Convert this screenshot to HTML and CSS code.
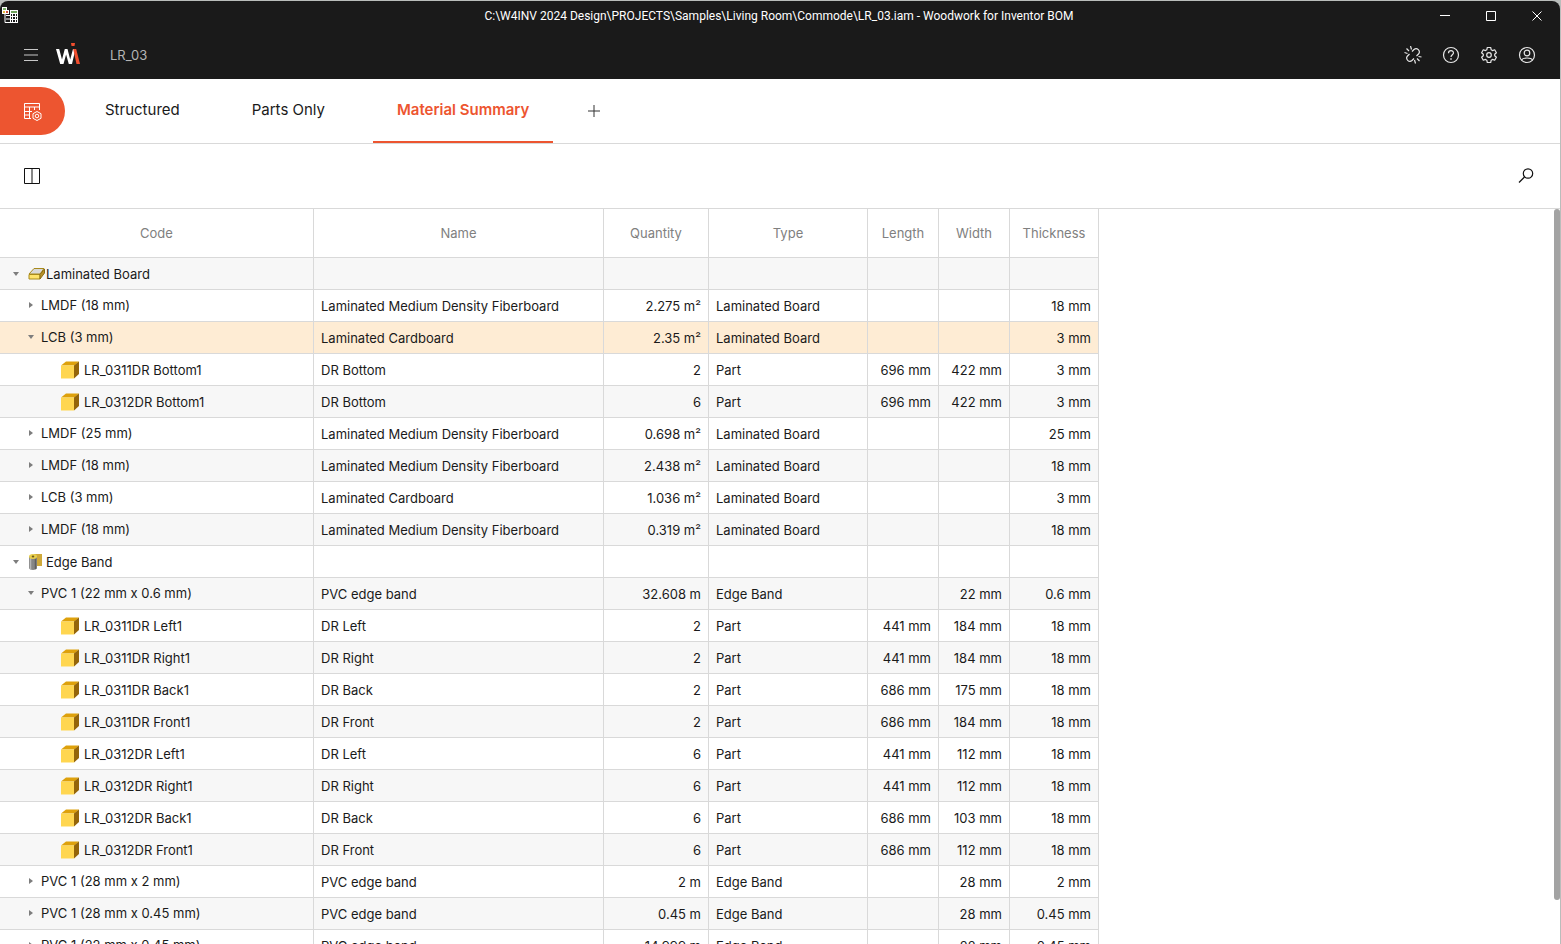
FILE: index.html
```
<!DOCTYPE html>
<html lang="en">
<head>
  <meta charset="UTF-8" />
  <meta name="viewport" content="width=device-width, initial-scale=1.0" />
  <title>Woodwork for Inventor BOM</title>
  <link rel="stylesheet" href="styles.css">
</head>
<body>
  <!-- shared icons -->
  <svg class="sprite" width="0" height="0" aria-hidden="true">
    <symbol id="part" viewBox="0 0 18 18">
      <path d="M0 4.5 5 0.5H18L13.500 4.500Z" fill="#dea10c"/>
      <path d="M13 4.500 18 0.500V13L13 17.500Z" fill="#94650a"/>
      <path d="M0 4.500H13V17.500H0Z" fill="#ffd650"/>
    </symbol>
    <symbol id="open" viewBox="0 0 6 6">
      <path d="M0 1H6L3 5Z" fill="#7d7d7d"/>
    </symbol>
    <symbol id="closed" viewBox="0 0 6 6">
      <path d="M1 0 5 3 1 6Z" fill="#7d7d7d"/>
    </symbol>
  </svg>

  <div class="window">
    <header class="top">
      <div class="titlebar">
        <svg class="app-icon" width="18" height="18" viewBox="0 0 18 18">
          <path d="M3 6V15.500H8M4 8.500H8M4 12H8" fill="none" stroke="#fff"/>
          <path d="M0 0H5V3H7V7H0Z" fill="#fff"/>
          <path d="M1 1H4V3H1Z" fill="#7bb069"/>
          <path d="M1 4H3V6H1Z" fill="#e5b93c"/>
          <path d="M4 4H6V6H4Z" fill="#d0503c"/>
          <path d="M8 3H16V16H8Z" fill="#fff"/>
          <path d="M9 4H15V6H9Z" fill="#6fa35c"/>
          <path d="M9 7H10V9H9ZM11 7H13V9H11ZM14 7H15V9H14ZM9 10H10V12H9ZM11 10H13V12H11ZM14 10H15V12H14ZM9 13H10V15H9ZM11 13H13V15H11ZM14 13H15V15H14Z" fill="#1a1a1a"/>
        </svg>
        <span class="title">C:\W4INV 2024 Design\PROJECTS\Samples\Living Room\Commode\LR_03.iam - Woodwork for Inventor BOM</span>
        <div class="window-buttons">
          <button type="button" aria-label="Minimize"><svg width="12" height="12" viewBox="0 0 12 12"><path d="M1 5.500H11" stroke="#fff"/></svg></button>
          <button type="button" aria-label="Maximize"><svg width="12" height="12" viewBox="0 0 12 12"><path d="M1.500 1.500H10.500V10.500H1.500Z" fill="none" stroke="#fff"/></svg></button>
          <button type="button" aria-label="Close"><svg width="12" height="12" viewBox="0 0 12 12"><path d="M1.500 1.500 10.500 10.500M10.500 1.500 1.500 10.500" stroke="#fff"/></svg></button>
        </div>
      </div>
      <div class="appbar">
        <button type="button" aria-label="Menu"><svg width="14" height="12" viewBox="0 0 14 12"><path d="M0 .5H14M0 6H14M0 11.500H14" stroke="#c8c8c8"/></svg></button>
        <svg class="logo" width="24" height="22" viewBox="0 0 24 22">
          <path d="M0 6H3.200L6 16.500 8.800 6H11.500L14.200 16.500 17 6H19.500L16 21H12.800L10.100 11.500 7.500 21H4.200Z" fill="#fff"/>
          <path d="M15 0H19L18.500 3H15.500ZM17.200 6H20.200L24 21H20.500Z" fill="#f04e2e"/>
        </svg>
        <span class="doc">LR_03</span>
        <div class="tools">
          <button type="button" aria-label="Unlink">
            <svg width="18" height="18" viewBox="0 0 18 18" fill="none" stroke="#e6e6e6" stroke-width="1.200">
              <path d="M8 5.500 10 3.500C13 1 17 5 14.500 8L12.500 10M5.500 8 3.500 10C1 13 5 17 8 14.500L10 12.500M6.500 0 7.500 3.500M2.500 2.500 5 5M.5 6.500 3.500 7.500M11.500 17.500 10.500 14M15.500 15 13 12.500M17.500 11 14.500 10.500"/>
            </svg>
          </button>
          <button type="button" aria-label="Help">
            <svg width="18" height="18" viewBox="0 0 18 18" fill="none" stroke="#e6e6e6" stroke-width="1.200">
              <circle cx="9" cy="9" r="7.500"/>
              <path d="M6.500 7.200C6.500 3.800 11.500 3.800 11.500 7 11.500 8.700 9 9 9 11"/>
              <path d="M9 12.300V13.800" stroke-width="1.500"/>
            </svg>
          </button>
          <button type="button" aria-label="Settings">
            <svg width="18" height="18" viewBox="0 0 18 18" fill="none" stroke="#e6e6e6" stroke-width="1.200" stroke-linejoin="round">
              <path d="M7.300 1.500H10.700L11.200 3.800 12.500 4.600 14.700 3.800 16.400 6.700 14.700 8.200V9.800L16.400 11.300 14.700 14.200 12.500 13.400 11.200 14.200 10.700 16.500H7.300L6.800 14.200 5.500 13.400 3.300 14.200 1.600 11.300 3.300 9.800V8.200L1.600 6.700 3.300 3.800 5.500 4.600 6.800 3.800Z"/>
              <circle cx="9" cy="9" r="2.300"/>
            </svg>
          </button>
          <button type="button" aria-label="Account">
            <svg width="18" height="18" viewBox="0 0 18 18" fill="none" stroke="#e6e6e6" stroke-width="1.200">
              <circle cx="9" cy="9" r="7.500"/>
              <circle cx="9" cy="7" r="2.800"/>
              <path d="M3.500 14C5 11.300 13 11.300 14.500 14"/>
            </svg>
          </button>
        </div>
      </div>
    </header>

    <nav class="tabs">
      <button type="button" class="config" aria-label="Configure views">
        <svg width="19" height="19" viewBox="0 0 19 19" fill="none" stroke="#fff">
          <path d="M16.500 8V1.500H1.500V16.500H8M1.500 5H16.500M1.500 9.500H9M1.500 13H7M6.500 5V16.500M11.500 5V8"/>
          <path d="M14 9.500 18 11.700V16.300L14 18.500 10 16.300V11.700Z"/>
          <circle cx="14" cy="14" r="1.800"/>
        </svg>
      </button>
      <button type="button" class="tab">Structured</button>
      <button type="button" class="tab">Parts Only</button>
      <button type="button" class="tab active">Material Summary</button>
      <button type="button" class="add" aria-label="Add view"><svg width="12" height="12" viewBox="0 0 12 12"><path d="M6 0V12M0 6H12" stroke="#333"/></svg></button>
    </nav>

    <div class="toolbar">
      <button type="button" aria-label="Columns"><svg width="16" height="16" viewBox="0 0 16 16" fill="none"><path d="M.5.5H15.500V15.500H.5Z" stroke="#111"/><path d="M8 1V15" stroke="#111"/></svg></button>
      <button type="button" aria-label="Search"><svg width="16" height="16" viewBox="0 0 16 16" fill="none" stroke="#111" stroke-width="1.200"><circle cx="10" cy="5.500" r="4.700"/><path d="M6.500 9 1 14.500"/></svg></button>
    </div>

    <main class="grid">
      <table>
        <colgroup>
          <col class="c-code"><col class="c-name"><col class="c-qty"><col class="c-type"><col class="c-size"><col class="c-size"><col class="c-thick">
        </colgroup>
        <thead>
          <tr><th>Code</th><th>Name</th><th>Quantity</th><th>Type</th><th>Length</th><th>Width</th><th>Thickness</th></tr>
        </thead>
        <tbody>
          <tr class="group">
            <td><svg class="arrow"><use href="#open"/></svg><svg class="icon" viewBox="0 0 18 18"><path d="M1 9 6 3.500H16L12 9Z" fill="#d9d9d9" stroke="#a88a1c"/><path d="M1 9.500H12V14H1Z" fill="#ffe36a" stroke="#a88a1c"/><path d="M12 9.500 16.500 4V8L12 14Z" fill="#b8922a" stroke="#8a6d14"/></svg>Laminated Board</td>
            <td></td><td></td><td></td><td></td><td></td><td></td>
          </tr>
          <tr class="material"><td><svg class="arrow"><use href="#closed"/></svg>LMDF (18 mm)</td><td>Laminated Medium Density Fiberboard</td><td>2.275 m²</td><td>Laminated Board</td><td></td><td></td><td>18 mm</td></tr>
          <tr class="material selected"><td><svg class="arrow"><use href="#open"/></svg>LCB (3 mm)</td><td>Laminated Cardboard</td><td>2.35 m²</td><td>Laminated Board</td><td></td><td></td><td>3 mm</td></tr>
          <tr class="part"><td><svg class="icon"><use href="#part"/></svg>LR_0311DR Bottom1</td><td>DR Bottom</td><td>2</td><td>Part</td><td>696 mm</td><td>422 mm</td><td>3 mm</td></tr>
          <tr class="part"><td><svg class="icon"><use href="#part"/></svg>LR_0312DR Bottom1</td><td>DR Bottom</td><td>6</td><td>Part</td><td>696 mm</td><td>422 mm</td><td>3 mm</td></tr>
          <tr class="material"><td><svg class="arrow"><use href="#closed"/></svg>LMDF (25 mm)</td><td>Laminated Medium Density Fiberboard</td><td>0.698 m²</td><td>Laminated Board</td><td></td><td></td><td>25 mm</td></tr>
          <tr class="material"><td><svg class="arrow"><use href="#closed"/></svg>LMDF (18 mm)</td><td>Laminated Medium Density Fiberboard</td><td>2.438 m²</td><td>Laminated Board</td><td></td><td></td><td>18 mm</td></tr>
          <tr class="material"><td><svg class="arrow"><use href="#closed"/></svg>LCB (3 mm)</td><td>Laminated Cardboard</td><td>1.036 m²</td><td>Laminated Board</td><td></td><td></td><td>3 mm</td></tr>
          <tr class="material"><td><svg class="arrow"><use href="#closed"/></svg>LMDF (18 mm)</td><td>Laminated Medium Density Fiberboard</td><td>0.319 m²</td><td>Laminated Board</td><td></td><td></td><td>18 mm</td></tr>
          <tr class="group">
            <td><svg class="arrow"><use href="#open"/></svg><svg class="icon" viewBox="0 0 18 18"><path d="M6 1H14V13H6Z" fill="#cfa93a"/><path d="M1 3.500V15C1 17.500 9 17.500 9 15V3.500Z" fill="#858585"/><path d="M2.500 5V16" stroke="#b5b5b5" stroke-width="1.500"/><path d="M7.500 5V16" stroke="#5f5f5f" stroke-width="1.500"/><ellipse cx="5" cy="3.500" rx="4" ry="2.500" fill="#e8cf4d"/><ellipse cx="5" cy="3.500" rx="1.300" ry="1" fill="#6b5a1a"/></svg>Edge Band</td>
            <td></td><td></td><td></td><td></td><td></td><td></td>
          </tr>
          <tr class="material"><td><svg class="arrow"><use href="#open"/></svg>PVC 1 (22 mm x 0.6 mm)</td><td>PVC edge band</td><td>32.608 m</td><td>Edge Band</td><td></td><td>22 mm</td><td>0.6 mm</td></tr>
          <tr class="part"><td><svg class="icon"><use href="#part"/></svg>LR_0311DR Left1</td><td>DR Left</td><td>2</td><td>Part</td><td>441 mm</td><td>184 mm</td><td>18 mm</td></tr>
          <tr class="part"><td><svg class="icon"><use href="#part"/></svg>LR_0311DR Right1</td><td>DR Right</td><td>2</td><td>Part</td><td>441 mm</td><td>184 mm</td><td>18 mm</td></tr>
          <tr class="part"><td><svg class="icon"><use href="#part"/></svg>LR_0311DR Back1</td><td>DR Back</td><td>2</td><td>Part</td><td>686 mm</td><td>175 mm</td><td>18 mm</td></tr>
          <tr class="part"><td><svg class="icon"><use href="#part"/></svg>LR_0311DR Front1</td><td>DR Front</td><td>2</td><td>Part</td><td>686 mm</td><td>184 mm</td><td>18 mm</td></tr>
          <tr class="part"><td><svg class="icon"><use href="#part"/></svg>LR_0312DR Left1</td><td>DR Left</td><td>6</td><td>Part</td><td>441 mm</td><td>112 mm</td><td>18 mm</td></tr>
          <tr class="part"><td><svg class="icon"><use href="#part"/></svg>LR_0312DR Right1</td><td>DR Right</td><td>6</td><td>Part</td><td>441 mm</td><td>112 mm</td><td>18 mm</td></tr>
          <tr class="part"><td><svg class="icon"><use href="#part"/></svg>LR_0312DR Back1</td><td>DR Back</td><td>6</td><td>Part</td><td>686 mm</td><td>103 mm</td><td>18 mm</td></tr>
          <tr class="part"><td><svg class="icon"><use href="#part"/></svg>LR_0312DR Front1</td><td>DR Front</td><td>6</td><td>Part</td><td>686 mm</td><td>112 mm</td><td>18 mm</td></tr>
          <tr class="material"><td><svg class="arrow"><use href="#closed"/></svg>PVC 1 (28 mm x 2 mm)</td><td>PVC edge band</td><td>2 m</td><td>Edge Band</td><td></td><td>28 mm</td><td>2 mm</td></tr>
          <tr class="material"><td><svg class="arrow"><use href="#closed"/></svg>PVC 1 (28 mm x 0.45 mm)</td><td>PVC edge band</td><td>0.45 m</td><td>Edge Band</td><td></td><td>28 mm</td><td>0.45 mm</td></tr>
          <tr class="material"><td><svg class="arrow"><use href="#closed"/></svg>PVC 1 (22 mm x 0.45 mm)</td><td>PVC edge band</td><td>14.999 m</td><td>Edge Band</td><td></td><td>22 mm</td><td>0.45 mm</td></tr>
        </tbody>
      </table>
      <div class="scroll-thumb"></div>
    </main>
  </div>
</body>
</html>
```
FILE: styles.css
```
* {
  box-sizing: border-box;
}
body {
  margin: 0;
  background-color: #b9bdbb;
  color: #1a1a1a;
  font-family: Inter, "Liberation Sans", sans-serif;
  font-size: 13px;
  font-weight: 400;
}
button {
  display: flex;
  align-items: center;
  justify-content: center;
  padding: 0;
  border: 0;
  background: none;
  color: inherit;
  font: inherit;
  cursor: pointer;
}
.sprite {
  position: absolute;
}
.window {
  display: flex;
  flex-direction: column;
  height: 100vh;
  padding: 1px 1px 0 0;
  overflow: hidden;
}

/* title and app bar */
.top {
  background-color: #1a1a1a;
  border-radius: 8px 8px 0 0;
}
.titlebar {
  display: flex;
  align-items: center;
  height: 30px;
  color: #fff;
  font-family: Roboto, "Noto Sans", sans-serif;
  font-size: 12px;
}
.app-icon {
  margin-left: 2px;
}
.title {
  flex: 1;
  padding-left: 116px;
  text-align: center;
  white-space: nowrap;
}
.window-buttons {
  display: flex;
}
.window-buttons button {
  width: 46px;
  height: 30px;
}
.appbar {
  display: flex;
  align-items: center;
  height: 48px;
  padding: 0 24px;
}
.logo {
  margin: 0 30px 2px 18px;
}
.doc {
  color: #b4b4b4;
}
.tools {
  display: flex;
  gap: 20px;
  margin-left: auto;
}

/* view tabs */
.tabs {
  display: flex;
  align-items: center;
  height: 65px;
  background-color: #fff;
  border-bottom: 1px solid #d9d9d9;
}
.config {
  width: 65px;
  height: 48px;
  margin-right: 16px;
  border-radius: 0 24px 24px 0;
  background-color: #ed5530;
}
.tab {
  height: 64px;
  margin-right: 24px;
  padding: 0 24px 2px;
  border-bottom: 2px solid transparent;
  font-size: 15px;
}
.tab.active {
  border-bottom-color: #ed5530;
  color: #ed5530;
  font-weight: 600;
}
.add {
  width: 34px;
  height: 34px;
}
.toolbar {
  display: flex;
  align-items: center;
  justify-content: space-between;
  height: 65px;
  padding: 0 26px 0 24px;
  background-color: #fff;
  border-bottom: 1px solid #d9d9d9;
}

/* bill of materials */
.grid {
  position: relative;
  flex: 1;
  min-height: 0;
  overflow: hidden;
  background-color: #fff;
}
table {
  width: 1099px;
  table-layout: fixed;
  border-collapse: separate;
  border-spacing: 0;
}
.c-code {
  width: 314px;
}
.c-name {
  width: 290px;
}
.c-qty {
  width: 105px;
}
.c-type {
  width: 159px;
}
.c-size {
  width: 71px;
}
.c-thick {
  width: 89px;
}
th, td {
  height: 32px;
  padding: 0 7px;
  border-right: 1px solid #d9d9d9;
  border-bottom: 1px solid #d9d9d9;
  text-align: left;
  white-space: nowrap;
}
th {
  height: 49px;
  padding: 0;
  color: #808080;
  font-weight: 400;
  text-align: center;
}
tbody tr:nth-child(odd) {
  background-color: #f7f7f7;
}
tbody tr.selected {
  background-color: #feecd4;
}
td:nth-child(3), td:nth-child(n+5) {
  text-align: right;
}
.arrow {
  width: 6px;
  height: 6px;
  margin-right: 7px;
  vertical-align: 2px;
}
.icon {
  width: 18px;
  height: 18px;
  vertical-align: -4px;
}
.group td:first-child {
  padding-left: 13px;
}
.group .icon {
  margin: 0 0 0 2px;
}
.material td:first-child {
  padding-bottom: 2px;
  padding-left: 28px;
}
.part td:first-child {
  padding-left: 61px;
}
.part .icon {
  margin-right: 5px;
}
.scroll-thumb {
  position: absolute;
  top: 0;
  right: 0;
  width: 6px;
  height: 94%;
  border-radius: 3px;
  background-color: #a3a3a3;
}
```
